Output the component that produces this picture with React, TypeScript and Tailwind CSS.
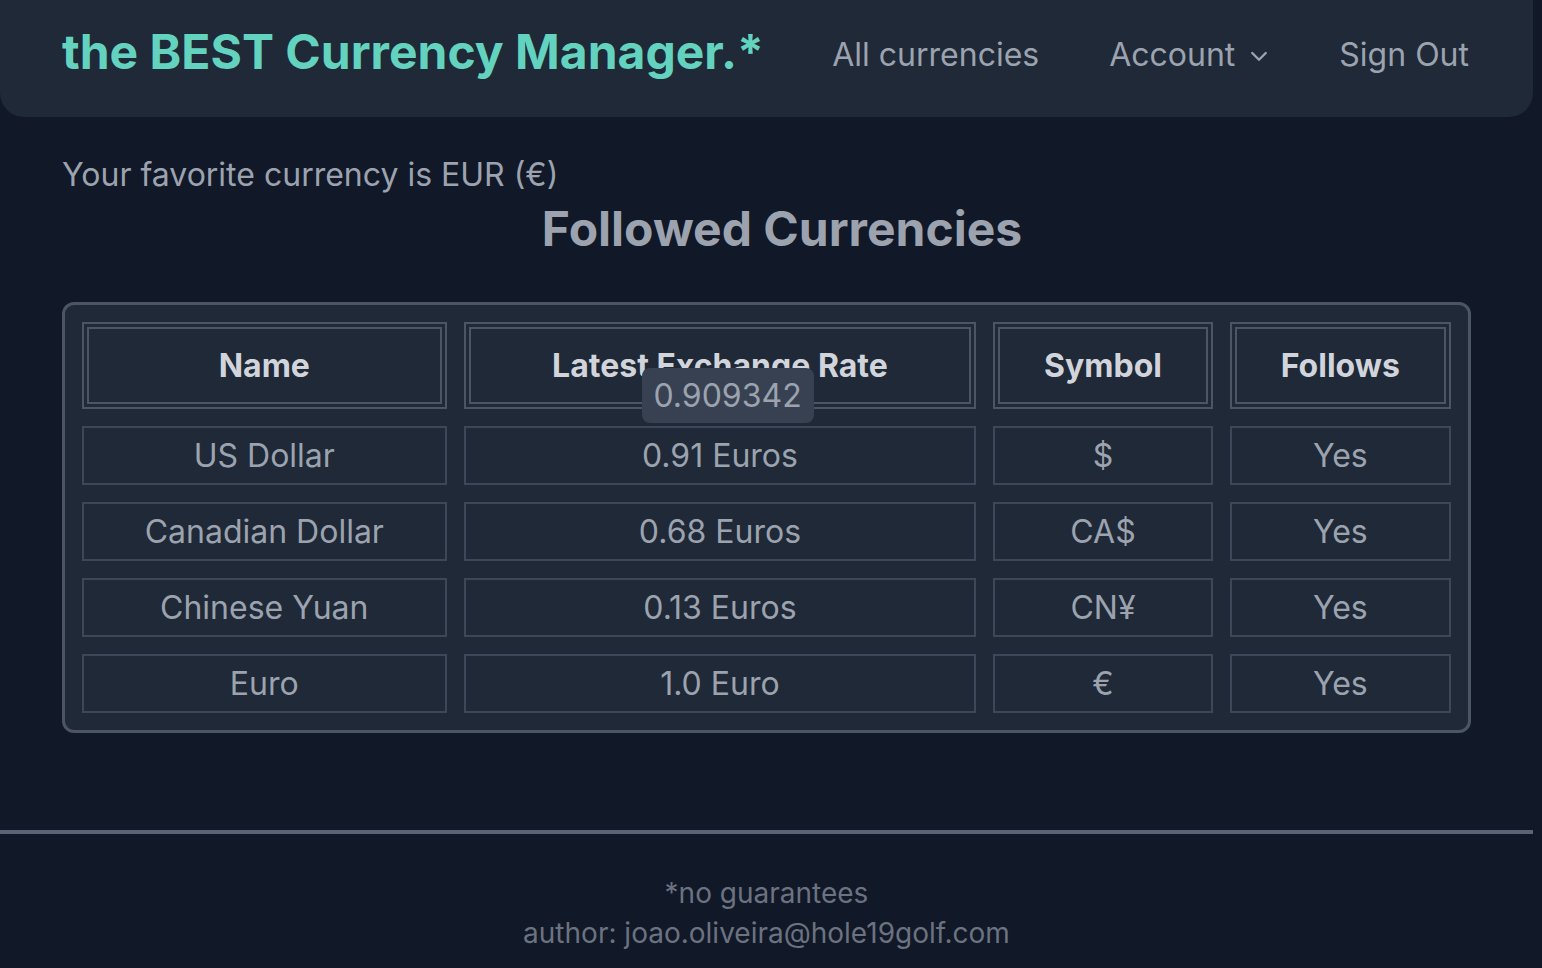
import React from 'react';

const CURRENCIES = [
  { name: 'US Dollar', rate: '0.91 Euros', symbol: '$', follows: 'Yes' },
  { name: 'Canadian Dollar', rate: '0.68 Euros', symbol: 'CA$', follows: 'Yes' },
  { name: 'Chinese Yuan', rate: '0.13 Euros', symbol: 'CN¥', follows: 'Yes' },
  { name: 'Euro', rate: '1.0 Euro', symbol: '€', follows: 'Yes' }
];

function Chevron() {
  return (
    <svg width="30" height="30" viewBox="0 0 20 20" fill="none" className="ml-[9px] mt-[2px]">
      <path d="M5.5 8l4.5 4.5 4.5-4.5" stroke="currentColor" strokeWidth="1.6" strokeLinecap="round" strokeLinejoin="round" />
    </svg>
  );
}

export default function App() {
  return (
    <div className="min-h-screen bg-[#111827] font-[Inter,sans-serif]">
      <div className="w-[1533px]">
        <nav className="h-[117px] bg-[#1f2937] rounded-b-[24px] flex items-center justify-between pl-[62px] pr-[64px]">
          <div className="text-[48px] font-bold text-[#63d3bf] -mt-[14px]">
            the BEST Currency Manager.*
          </div>
          <div className="flex items-center text-[32px] text-[#9ca3af] -mt-[8px]">
            <a className="mr-[70px]">All currencies</a>
            <a className="flex items-center mr-[65px]">
              Account
              <Chevron />
            </a>
            <a>Sign Out</a>
          </div>
        </nav>

        <main className="px-[62px] pt-[34px]">
          <p className="text-[32px] leading-[48px] text-[#9ca3af]">
            Your favorite currency is EUR (€)
          </p>
          <h1 className="mt-[6px] text-[48px] leading-[48px] font-bold text-[#9ca3af] text-center pl-[31px]">
            Followed Currencies
          </h1>

          <div className="mt-[49px] bg-[#1f2937] border-[3px] border-[#4b5563] rounded-[12px]">
            <table className="w-full border-separate border-spacing-[17px] text-[32px]">
              <thead>
                <tr className="h-[87px]">
                  {['Name', 'Latest Exchange Rate', 'Symbol', 'Follows'].map((h, i) => (
                    <th
                      key={h}
                      className={
                        'relative border-[7px] border-double border-[#4b5563] font-bold text-[#d1d5db] ' +
                        ['w-[364px]', 'w-[512px]', 'w-[219px]', 'w-[221px]'][i]
                      }
                    >
                      {h}
                      {i === 1 && (
                        <span className="absolute left-[171px] top-[39px] w-[172px] h-[55px] rounded-[8px] bg-[#374151] text-[#9ca3af] font-normal leading-[55px] text-center">
                          0.909342
                        </span>
                      )}
                    </th>
                  ))}
                </tr>
              </thead>
              <tbody>
                {CURRENCIES.map((c) => (
                  <tr key={c.name} className="h-[59px]">
                    <td className="border-2 border-[#3c4859] text-center text-[#9ca3af]">{c.name}</td>
                    <td className="border-2 border-[#3c4859] text-center text-[#9ca3af]">{c.rate}</td>
                    <td className="border-2 border-[#3c4859] text-center text-[#9ca3af]">{c.symbol}</td>
                    <td className="border-2 border-[#3c4859] text-center text-[#9ca3af]">{c.follows}</td>
                  </tr>
                ))}
              </tbody>
            </table>
          </div>
        </main>

        <footer className="mt-[97px]">
          <div className="h-[4px] bg-[#5b6477]" />
          <div className="pt-[39px] text-center text-[28px] leading-[40px] text-[#6b7280]">
            <p>*no guarantees</p>
            <p>author: joao.oliveira@hole19golf.com</p>
          </div>
        </footer>
      </div>
    </div>
  );
}
